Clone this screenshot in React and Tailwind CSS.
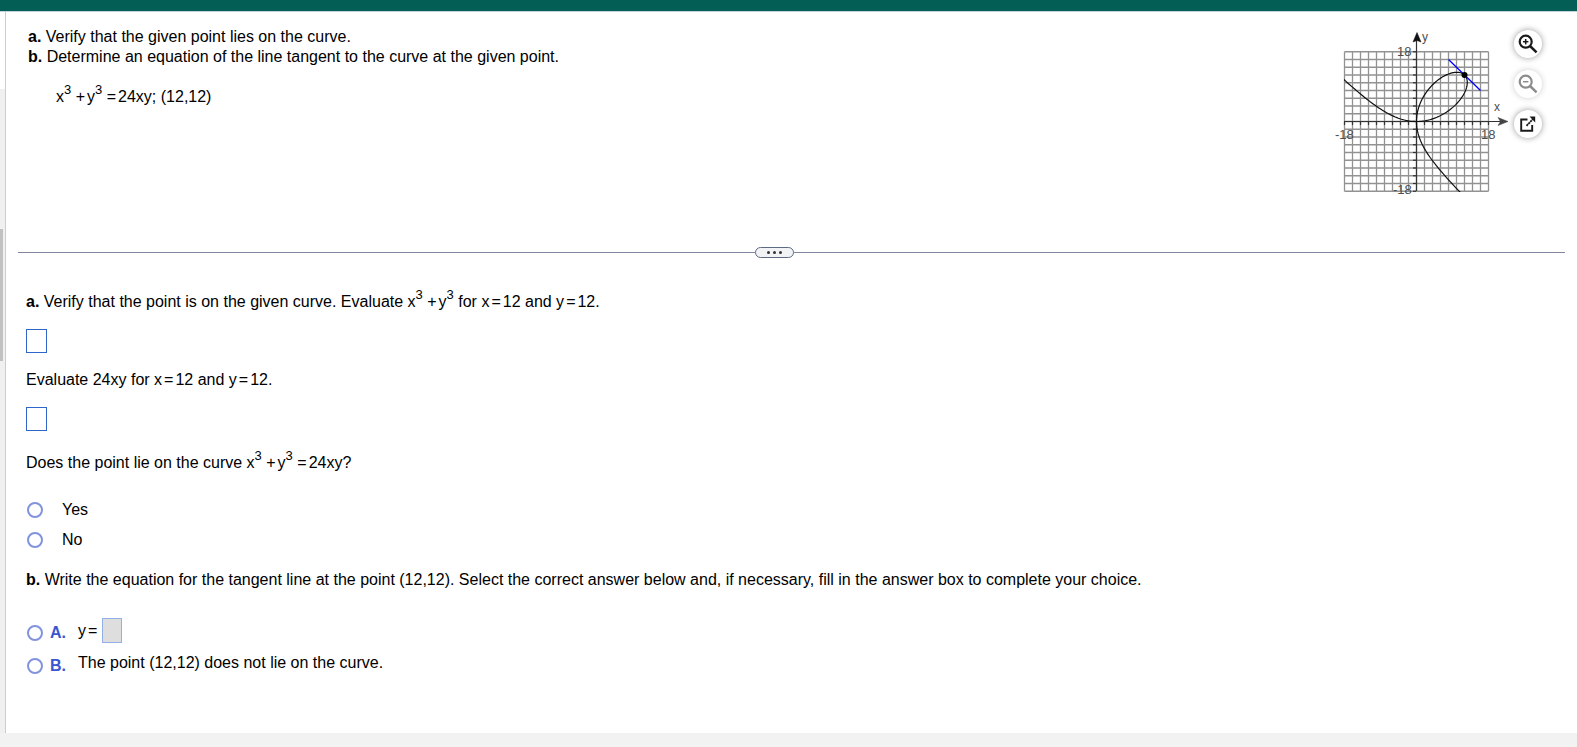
import { useState } from 'react';

const ORIGIN_X = 83.5;
const ORIGIN_Y = 93.5;
const UNIT_X = 4;
const UNIT_Y = 3.875;

const toX = (x) => ORIGIN_X + x * UNIT_X;
const toY = (y) => ORIGIN_Y - y * UNIT_Y;

// x = 24t / (1 + t^3), y = 24t^2 / (1 + t^3)
const tracePath = (from, to, steps, swap) => {
  const points = [];
  for (let i = 0; i <= steps; i++) {
    const t = from + ((to - from) * i) / steps;
    const d = 1 + t * t * t;
    const a = (24 * t) / d;
    const b = (24 * t * t) / d;
    const x = swap ? b : a;
    const y = swap ? a : b;
    points.push(`${toX(x).toFixed(2)} ${toY(y).toFixed(2)}`);
  }
  return 'M' + points.join('L');
};

const gridSteps = Array.from({ length: 19 }, (_, i) => -18 + i * 2);

function Graph() {
  return (
    <svg width="176" height="172" viewBox="0 0 176 172" role="img" aria-label="Graph of the curve and its tangent line">
      <defs>
        <clipPath id="plot">
          <rect x="11" y="23" width="145" height="141" />
        </clipPath>
      </defs>
      <g stroke="#929292" strokeWidth="1.3">
        {gridSteps.map((n) => (
          <line key={`v${n}`} x1={toX(n)} x2={toX(n)} y1={toY(18)} y2={toY(-18)} />
        ))}
        {gridSteps.map((n) => (
          <line key={`h${n}`} x1={toX(-18)} x2={toX(18)} y1={toY(n)} y2={toY(n)} />
        ))}
      </g>
      <g stroke="#333" strokeWidth="1.2">
        <line x1="11" x2="168" y1={ORIGIN_Y} y2={ORIGIN_Y} />
        <line x1={ORIGIN_X} x2={ORIGIN_X} y1="10" y2="163" />
        {gridSteps.map((n) => (
          <g key={n}>
            <line x1={toX(n)} x2={toX(n)} y1="94" y2="97" />
            <line x1="80" x2="83" y1={toY(n)} y2={toY(n)} />
          </g>
        ))}
      </g>
      <path d="M84 4.5 L88 14 L84 12.5 L80 14 Z" fill="#111" stroke="#111" strokeWidth="0.5" />
      <path d="M175 93.5 L165 89.5 L167.5 93.5 L165 97.5 Z" fill="#444" stroke="#444" strokeWidth="0.5" />
      <g clipPath="url(#plot)" fill="none" stroke="#111" strokeWidth="1.2">
        <path d={tracePath(-0.85, 1, 120, false)} />
        <path d={tracePath(-0.85, 1, 120, true)} />
      </g>
      <line x1={toX(8)} y1={toY(16)} x2={toX(16)} y2={toY(8)} stroke="#0000ff" strokeWidth="1.3" />
      <circle cx={toX(12)} cy={toY(12)} r="3" fill="#000" />
      <g fill="#4d4d4d" fontSize="13">
        <text x="89" y="13" fontSize="12">y</text>
        <text x="161" y="83" fontSize="12">x</text>
        <text x="64" y="28">18</text>
        <text x="60" y="166">-18</text>
        <text x="2" y="111">-18</text>
        <text x="148" y="111">18</text>
      </g>
    </svg>
  );
}

function Magnifier({ plus }) {
  return (
    <svg width="20" height="20" viewBox="0 0 20 20" fill="none" stroke="currentColor">
      <circle cx="7.7" cy="7.7" r="6" strokeWidth="2.2" />
      <path d="M12 12 L18.6 18.3" strokeWidth="2.5" />
      <path d="M5 7.7 H10.4" strokeWidth="1.5" />
      {plus && <path d="M7.7 5 V10.4" strokeWidth="1.5" />}
    </svg>
  );
}

function PopOut() {
  return (
    <svg width="18" height="18" viewBox="0 0 18 18" fill="none" stroke="currentColor">
      <path d="M8.5 4.5 H2.2 V15.8 H13.2 V10" strokeWidth="1.9" />
      <path d="M7.5 10.8 L14 4" strokeWidth="1.8" strokeDasharray="2.2 0.5" />
      <path d="M10.5 1.5 H16.2 V7.5 Z" fill="currentColor" stroke="none" />
    </svg>
  );
}

function RoundButton({ label, disabled, children }) {
  return (
    <button
      type="button"
      aria-label={label}
      disabled={disabled}
      className="flex size-7 items-center justify-center rounded-full bg-white text-[#1a1a1a] shadow-[0_0_6px_rgba(0,0,0,0.4)] disabled:text-[#8c8c8c] disabled:shadow-[0_0_6px_rgba(0,0,0,0.2)]"
    >
      {children}
    </button>
  );
}

function Cubed({ children }) {
  return (
    <>
      {children}
      <sup className="relative -top-2 align-baseline text-[13px] leading-none">3</sup>
    </>
  );
}

function Op({ children }) {
  return <span className="mx-0.5">{children}</span>;
}

function SumOfCubes() {
  return (
    <>
      <Cubed>x</Cubed> <span className="mr-0.5">+</span>
      <Cubed>y</Cubed>
    </>
  );
}

function Radio({ id, name, value, checked, onChange }) {
  return (
    <input
      type="radio"
      id={id}
      name={name}
      checked={checked}
      onChange={() => onChange(value)}
      className="size-4 shrink-0 appearance-none rounded-full border-2 border-[#8093dc] bg-white checked:border-[5px]"
    />
  );
}

export default function App() {
  const [onCurve, setOnCurve] = useState(null);
  const [choice, setChoice] = useState(null);

  return (
    <div className="flex min-h-screen flex-col bg-[#f2f2f2] font-['Liberation_Sans',Arial,sans-serif] text-base leading-5 text-black">
      <header className="h-3 border-b border-[#c5d3dc] bg-[#035f56]" />

      <div className="flex flex-1">
        {/* Scroll rail */}
        <div className="w-[5px] bg-[#f0f0f0]">
          <div className="h-[77px] bg-white" />
          <div className="mt-[140px] h-[132px] w-[3px] bg-[#c1c1c1]" />
        </div>

        <main className="flex-1 border-l border-[#c9cce0] bg-white pb-14">
          {/* Question */}
          <section className="flex h-[235px] items-start justify-between pr-[35px] pl-[22px]">
            <div className="pt-[15px]">
              <p><b>a.</b> Verify that the given point lies on the curve.</p>
              <p><b>b.</b> Determine an equation of the line tangent to the curve at the given point.</p>
              <p className="mt-5 ml-7">
                <SumOfCubes /> <span className="mr-0.5">=</span>24xy; (12,12)
              </p>
            </div>
            <div className="flex gap-[5px]">
              <div className="pt-4">
                <Graph />
              </div>
              <div className="flex flex-col gap-3 pt-[18px]">
                <RoundButton label="Zoom in"><Magnifier plus /></RoundButton>
                <RoundButton label="Zoom out" disabled><Magnifier /></RoundButton>
                <RoundButton label="Open in new window"><PopOut /></RoundButton>
              </div>
            </div>
          </section>

          {/* Divider */}
          <div className="mx-3 flex items-center">
            <div className="h-px grow basis-0 bg-[#8088a0]" />
            <button
              type="button"
              aria-label="Resize panels"
              className="flex h-[11px] w-[39px] items-center justify-center gap-[3px] rounded-full border border-[#5d6b82] bg-[#f1f3f5]"
            >
              <span className="size-[3px] rounded-full bg-[#333]" />
              <span className="size-[3px] rounded-full bg-[#333]" />
              <span className="size-[3px] rounded-full bg-[#333]" />
            </button>
            <div className="h-px grow basis-[34px] bg-[#8088a0]" />
          </div>

          {/* Answers */}
          <section className="px-5 pt-[34px]">
            <div className="flex flex-col items-start gap-[17px]">
              <label htmlFor="sum">
                <b>a.</b> Verify that the point is on the given curve. Evaluate <SumOfCubes /> for x<Op>=</Op>12 and y<Op>=</Op>12.
              </label>
              <input id="sum" type="text" className="h-6 w-[21px] border border-[#2f66c8]" />
              <label htmlFor="product">
                Evaluate 24xy for x<Op>=</Op>12 and y<Op>=</Op>12.
              </label>
              <input id="product" type="text" className="h-6 w-[21px] border border-[#2f66c8]" />
            </div>

            <fieldset className="mt-[22px]">
              <legend>
                Does the point lie on the curve <SumOfCubes /> <span className="mr-0.5">=</span>24xy?
              </legend>
              <div className="mt-[27px] flex flex-col gap-2.5 pl-px">
                <div className="flex items-center gap-[19px]">
                  <Radio id="yes" name="curve" value="yes" checked={onCurve === 'yes'} onChange={setOnCurve} />
                  <label htmlFor="yes">Yes</label>
                </div>
                <div className="flex items-center gap-[19px]">
                  <Radio id="no" name="curve" value="no" checked={onCurve === 'no'} onChange={setOnCurve} />
                  <label htmlFor="no">No</label>
                </div>
              </div>
            </fieldset>

            <fieldset className="mt-5">
              <legend>
                <b>b.</b> Write the equation for the tangent line at the point (12,12). Select the correct answer below and, if necessary, fill in the answer box to complete your choice.
              </legend>
              <div className="mt-7 flex flex-col gap-2.5 pl-px">
                <div className="flex items-center">
                  <div className="flex items-center pt-1">
                    <Radio id="choiceA" name="tangent" value="A" checked={choice === 'A'} onChange={setChoice} />
                    <label htmlFor="choiceA" className="ml-[7px] w-7 font-bold text-[#3a55cf]">A.</label>
                  </div>
                  <label htmlFor="tangent">y<Op>=</Op></label>
                  <input id="tangent" type="text" disabled className="ml-[3px] h-[25px] w-5 border border-[#94aee6] bg-[#dedede]" />
                </div>
                <div className="flex items-start">
                  <div className="flex items-center pt-[3px]">
                    <Radio id="choiceB" name="tangent" value="B" checked={choice === 'B'} onChange={setChoice} />
                    <label htmlFor="choiceB" className="ml-[7px] w-7 font-bold text-[#3a55cf]">B.</label>
                  </div>
                  <label htmlFor="choiceB">The point (12,12) does not lie on the curve.</label>
                </div>
              </div>
            </fieldset>
          </section>
        </main>
      </div>

      <footer className="h-3.5 bg-[#f2f2f2]" />
    </div>
  );
}
